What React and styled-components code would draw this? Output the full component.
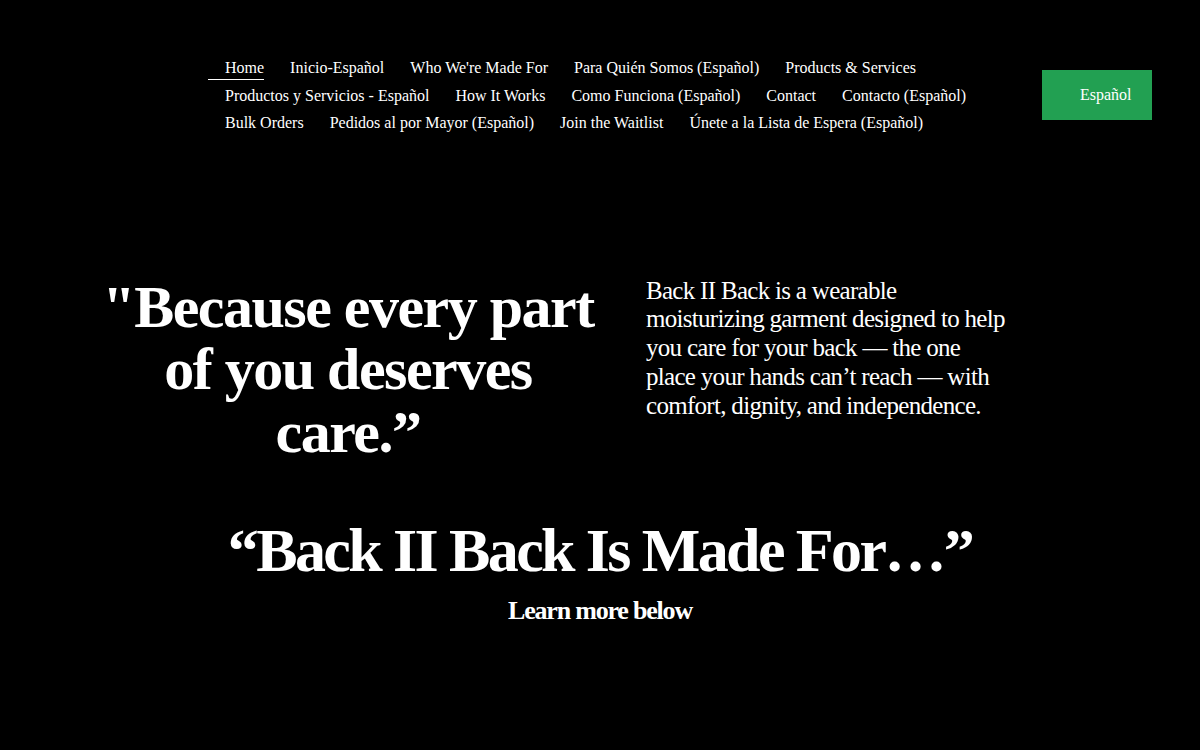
import React from 'react';
import styled, { createGlobalStyle } from 'styled-components';

const GlobalStyle = createGlobalStyle`
    html, body {
        margin: 0;
        padding: 0;
        background-color: #000000;
    }
    body {
        font-family: "Liberation Serif", "Times New Roman", serif;
        color: #FFFFFF;
    }
`;

const Page = styled('div')`
    min-height: 750px;
    background-color: #000000;
`;

const HeaderWrapper = styled('header')`
    display: flex;
    align-items: center;
    padding: 54px 48px 0 212px;
`;

const NavWrapper = styled('nav')`
    flex: 1;
    display: flex;
    flex-wrap: wrap;
    max-width: 790px;
`;

const NavLink = styled('a')`
    position: relative;
    padding: 0 13px;
    font-size: 16px;
    line-height: 27.5px;
    color: #FFFFFF;
    text-decoration: none;
    white-space: nowrap;

    &::after {
        content: '';
        display: ${({ $active }) => ($active ? 'block' : 'none')};
        position: absolute;
        left: -4px;
        width: 56px;
        bottom: 2px;
        height: 1px;
        background-color: #FFFFFF;
    }
`;

const LangButton = styled('button')`
    margin-left: auto;
    width: 110px;
    height: 50px;
    padding: 0 20px 0 38px;
    border: unset;
    background-color: #22A052;
    color: #FFFFFF;
    font-family: "Liberation Serif", "Times New Roman", serif;
    font-size: 16px;
    text-align: left;
    cursor: pointer;
`;

const Hero = styled('section')`
    display: grid;
    grid-template-columns: 496px 368px;
    column-gap: 50px;
    align-items: start;
    padding: 139px 0 0 100px;
`;

const Quote = styled('h1')`
    margin: 0;
    font-size: 60px;
    line-height: 62.5px;
    font-weight: bold;
    letter-spacing: -1.5px;
    text-align: center;
`;

const Blurb = styled('p')`
    margin: 1px 0 0;
    font-size: 25px;
    line-height: 28.8px;
    letter-spacing: -0.7px;
`;

const MadeFor = styled('section')`
    display: flex;
    flex-direction: column;
    align-items: center;
    padding-top: 51px;
`;

const MadeForTitle = styled('h2')`
    margin: 0;
    font-size: 62px;
    line-height: 72px;
    font-weight: bold;
    letter-spacing: -2.6px;
`;

const MadeForSub = styled('p')`
    margin: 9px 0 0;
    font-size: 26px;
    line-height: 32px;
    font-weight: bold;
    letter-spacing: -1.2px;
`;

const links = [
    'Home',
    'Inicio-Español',
    "Who We're Made For",
    'Para Quién Somos (Español)',
    'Products & Services',
    'Productos y Servicios - Español',
    'How It Works',
    'Como Funciona (Español)',
    'Contact',
    'Contacto (Español)',
    'Bulk Orders',
    'Pedidos al por Mayor (Español)',
    'Join the Waitlist',
    'Únete a la Lista de Espera (Español)',
];

const App = () => {
    return (
        <Page>
            <GlobalStyle />
            <HeaderWrapper>
                <NavWrapper>
                    {links.map((label, i) => (
                        <NavLink key={label} href="#" $active={i === 0}>
                            {label}
                        </NavLink>
                    ))}
                </NavWrapper>
                <LangButton>Español</LangButton>
            </HeaderWrapper>
            <Hero>
                <Quote>"Because every part of you deserves care.”</Quote>
                <Blurb>
                    Back II Back is a wearable moisturizing garment designed to help you care
                    for your back — the one place your hands can’t reach — with comfort,
                    dignity, and independence.
                </Blurb>
            </Hero>
            <MadeFor>
                <MadeForTitle>“Back II Back Is Made For…”</MadeForTitle>
                <MadeForSub>Learn more below</MadeForSub>
            </MadeFor>
        </Page>
    );
};

export default App;
